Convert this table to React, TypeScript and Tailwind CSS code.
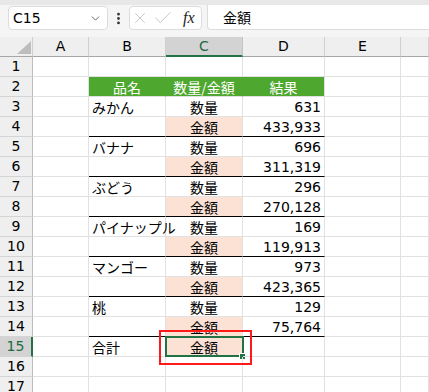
import { ChevronDown, EllipsisVertical, X, Check } from "lucide-react";

const COLS = ["A", "B", "C", "D", "E", ""];
const fruits = [
  { name: "みかん", qty: "631", amt: "433,933" },
  { name: "バナナ", qty: "696", amt: "311,319" },
  { name: "ぶどう", qty: "296", amt: "270,128" },
  { name: "パイナップル", qty: "169", amt: "119,913" },
  { name: "マンゴー", qty: "973", amt: "423,365" },
  { name: "桃", qty: "129", amt: "75,764" },
];

const jp = "font-['Noto_Sans_CJK_JP',sans-serif]";
const num = "font-['DejaVu_Sans',sans-serif]";

type Cell = { text?: string; align?: "left" | "center" | "right"; peach?: boolean; black?: boolean; green?: boolean; numeric?: boolean; selected?: boolean };

function buildRows(): Cell[][] {
  const rows: Cell[][] = [];
  rows.push([{}, {}, {}, {}, {}, {}]);
  rows.push([
    {},
    { text: "品名", align: "center", green: true },
    { text: "数量/金額", align: "center", green: true },
    { text: "結果", align: "center", green: true },
    {},
    {},
  ]);
  fruits.forEach((f) => {
    rows.push([
      {},
      { text: f.name, align: "left" },
      { text: "数量", align: "center" },
      { text: f.qty, align: "right", numeric: true },
      {},
      {},
    ]);
    rows.push([
      {},
      { black: true },
      { text: "金額", align: "center", peach: true, black: true },
      { text: f.amt, align: "right", numeric: true, black: true },
      {},
      {},
    ]);
  });
  rows.push([
    {},
    { text: "合計", align: "left" },
    { text: "金額", align: "center", peach: true, selected: true },
    {},
    {},
    {},
  ]);
  rows.push([{}, {}, {}, {}, {}, {}]);
  rows.push([{}, {}, {}, {}, {}, {}]);
  return rows;
}

export default function App() {
  const rows = buildRows();

  return (
    <div className="relative w-[429px] h-[392px] overflow-hidden bg-white text-black">
      {/* FORMULA BAR */}
      <div className="h-[37px] bg-[#f5f5f5] border-t-[5px] border-[#e8e8e8] flex items-start pt-px">
        <div className="ml-2 w-[100px] h-[24px] bg-white border border-[#dcdcdc] rounded-[4px] flex items-center justify-between pl-[4px] pr-[5px]">
          <span className={`${num} text-[14px] leading-none`}>C15</span>
          <ChevronDown size={13} strokeWidth={1.5} className="text-[#444]" />
        </div>
        <div className="w-[21px] h-[24px] flex items-center justify-center">
          <EllipsisVertical size={15} strokeWidth={2.5} className="text-[#333]" />
        </div>
        <div className="w-[73px] h-[24px] bg-white border border-[#dcdcdc] rounded-[4px] flex items-center pl-[1px] gap-[3px]">
          <X size={18} strokeWidth={0.9} className="text-[#b3b3b3]" />
          <Check size={22} strokeWidth={0.8} className="text-[#b3b3b3]" />
          <span className="font-['Liberation_Serif',serif] italic text-[16px] leading-none text-[#222] ml-[6px]">fx</span>
        </div>
        <div className={`ml-[5px] flex-1 h-[25px] -mt-px bg-white border-l border-b border-[#dcdcdc] rounded-bl-[4px] flex items-center pl-[15px] ${jp} text-[14px]`}>
          金額
        </div>
      </div>

      {/* SHEET */}
      <div className="grid grid-cols-[33px_56px_77px_77px_82px_76px_1fr]">
        {/* column headers */}
        <div className="relative h-[20px] bg-[#efefef] border-b border-r border-[#a6a6a6] border-r-[#d0d0d0]">
          <svg className="absolute left-[17px] top-[4px]" width="14" height="13" viewBox="0 0 14 13">
            <polygon points="14,0 14,13 0,13" fill="#bdbdbd" />
          </svg>
        </div>
        {COLS.map((c, i) => (
          <div
            key={i}
            className={`h-[20px] flex items-center justify-center border-r ${num} text-[14px] ${
              c === "C"
                ? "bg-[#d3d3d3] border-b-2 border-b-[#217346] border-r-[#c4c4c4] text-[#1e6b41]"
                : "bg-[#efefef] border-b border-b-[#a6a6a6] border-r-[#d0d0d0]"
            }`}
          >
            {c}
          </div>
        ))}

        {rows.map((row, r) => {
          const n = r + 1;
          const sel = n === 15;
          return [
            <div
              key={`h${n}`}
              className={`h-[20px] flex items-center justify-center border-b border-[#d4d4d4] ${num} text-[14px] ${
                sel ? "bg-[#d3d3d3] text-[#1e6b41] border-r-2 border-r-[#217346]" : "bg-[#efefef] border-r border-r-[#bdbdbd]"
              }`}
            >
              {n}
            </div>,
            ...row.map((cell, ci) => {
              const align =
                cell.align === "center" ? "justify-center" : cell.align === "right" ? "justify-end pr-[3px]" : "justify-start pl-[3px]";
              const bg = cell.green ? "bg-[#4ea72e] text-white" : cell.peach ? "bg-[#fbe2d5]" : "";
              const rightBorder = cell.green && ci < 3 ? "border-r-[#4ea72e]" : "border-r-[#e1e1e1]";
              const bottom = cell.black ? "border-b-black" : "border-b-[#e1e1e1]";
              return (
                <div
                  key={`c${n}-${ci}`}
                  className={`relative h-[20px] flex items-center border-r border-b whitespace-nowrap overflow-visible ${rightBorder} ${bottom} ${bg} ${align} ${
                    cell.numeric ? num : jp
                  } text-[14px] leading-none`}
                >
                  {cell.text}
                  {cell.selected && (
                    <>
                      <div className="absolute -left-px -top-px w-[79px] h-[21px] border-2 border-[#217346]" />
                      <div className="absolute right-[-4px] bottom-[-4px] w-[7px] h-[7px] bg-[#217346] border border-white" />
                    </>
                  )}
                </div>
              );
            }),
          ];
        })}
      </div>

      {/* annotation */}
      <div className="absolute left-[159px] top-[330px] w-[93px] h-[35px] border-2 border-[#ff1a1a]" />
    </div>
  );
}
